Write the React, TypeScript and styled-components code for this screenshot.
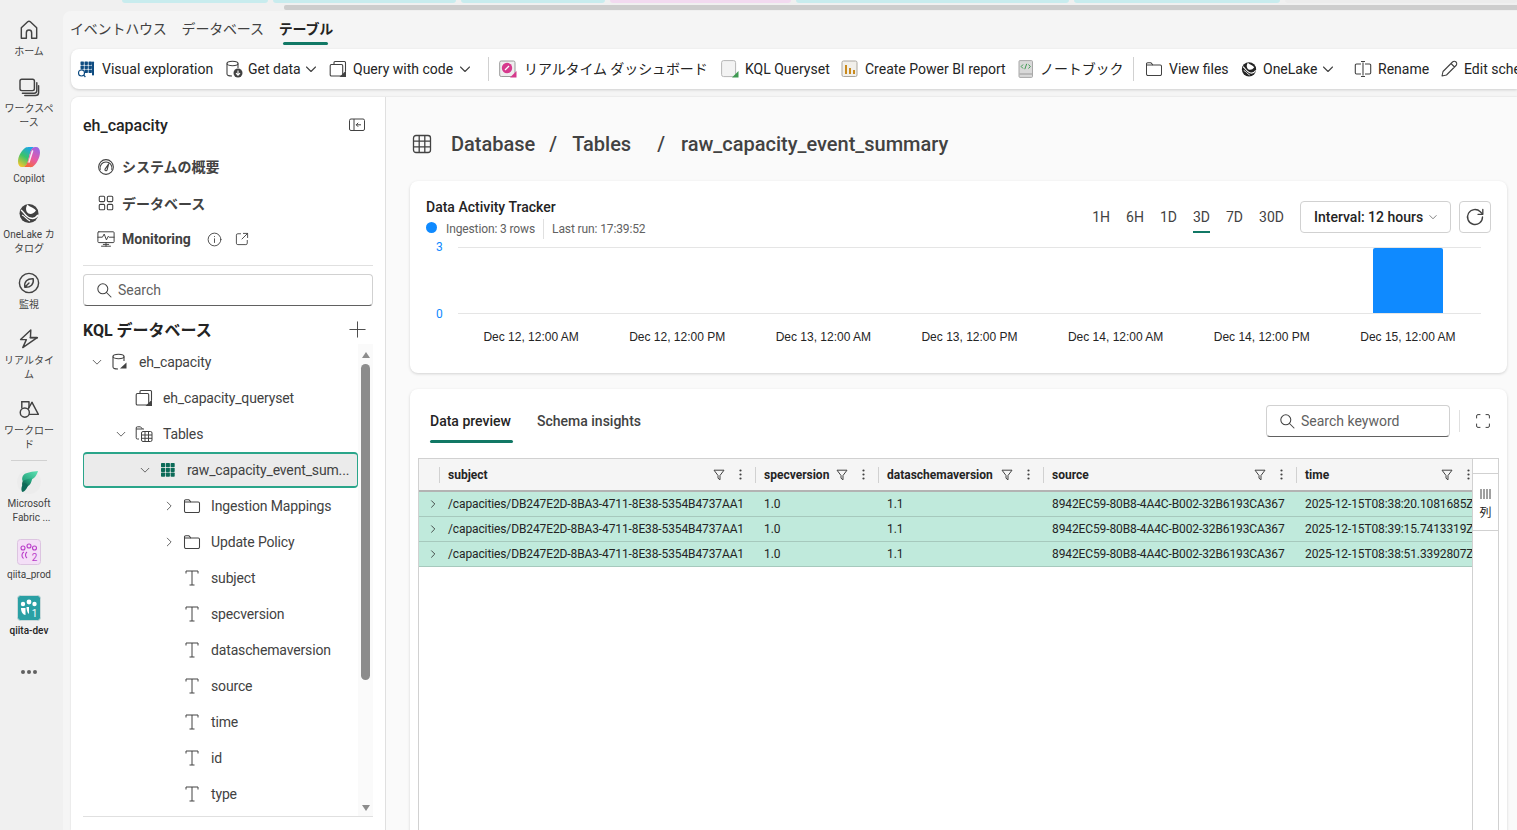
import React from "react";
import styled, { createGlobalStyle } from "styled-components";

const FONT = `Roboto, "Noto Sans CJK JP", sans-serif`;

const Global = createGlobalStyle`
  html, body { margin: 0; padding: 0; height: 100%; overflow: hidden; background: #f0f0f0; }
  body { font-family: ${FONT}; color: #242424; }
  * { box-sizing: border-box; }
  svg { display: block; flex: none; }
`;

const Page = styled.div`
  width: 1517px; height: 830px; overflow: hidden; display: flex; flex-direction: column; background: #f0f0f0;
`;
const TabStrip = styled.div`
  height: 3px; display: flex; gap: 5px; padding-left: 122px; flex: none;
`;
const StripTab = styled.div<{ $w: number; $c: string }>`
  width: ${p => p.$w}px; background: ${p => p.$c}; border-radius: 0 0 4px 4px;
`;
const TopScroll = styled.div`
  height: 5px; margin: 2px 0 1px 284px; background: #cdcdcd; flex: none; border-radius: 2px 0 0 2px;
`;
const Body = styled.div`
  flex: 1; min-height: 0; display: flex;
`;

/* Rail */
const Rail = styled.nav`
  width: 63px; flex: none; padding: 7px 5px 0 0; display: flex; flex-direction: column; align-items: center;
`;
const RailItem = styled.div<{ $after?: number }>`
  width: 58px; display: flex; flex-direction: column; align-items: center;
  margin-bottom: ${p => p.$after ?? 15}px;
`;
const RailLabel = styled.div<{ $strong?: boolean }>`
  margin-top: 3px; font-size: 10px; line-height: 14px; text-align: center; white-space: nowrap;
  color: ${p => (p.$strong ? "#242424" : "#424242")};
  font-weight: ${p => (p.$strong ? 500 : 400)};
`;
const RailRule = styled.div`
  width: 36px; height: 1px; background: #d1d1d1; margin: 0 0 9px;
`;
const RailDots = styled.div`
  display: flex; gap: 2px;
  span { width: 4px; height: 4px; border-radius: 50%; background: #616161; }
`;

/* Main */
const Main = styled.div`
  flex: 1; min-width: 0; display: flex; flex-direction: column; background: #f5f5f5; border-radius: 8px 0 0 0;
`;
const TopTabs = styled.div`
  height: 38px; flex: none; display: flex; padding-left: 7px; gap: 15px;
`;
const TopTab = styled.div<{ $on?: boolean }>`
  position: relative; height: 34px; line-height: 37px; font-size: 14px; letter-spacing: -.2px;
  color: ${p => (p.$on ? "#242424" : "#424242")}; font-weight: ${p => (p.$on ? 700 : 400)};
  &::after {
    content: ""; display: ${p => (p.$on ? "block" : "none")}; position: absolute; left: 4px; right: 5px; bottom: 0;
    height: 3px; background: #117865; border-radius: 2px;
  }
`;
const Toolbar = styled.div`
  height: 40px; flex: none; margin-left: 8px; background: #fff; border-radius: 8px 0 0 8px;
  box-shadow: 0 1px 3px rgba(0,0,0,.16); display: flex; align-items: center; padding-left: 6px; overflow: hidden;
`;
const Tool = styled.div<{ $w: number; $gap?: number }>`
  flex: none; width: ${p => p.$w}px; display: flex; align-items: center; gap: ${p => p.$gap ?? 6}px;
  font-size: 14px; color: #242424; white-space: nowrap;
`;
const ToolSep = styled.div<{ $w: number }>`
  flex: none; width: ${p => p.$w}px; height: 24px;
  &::before { content: ""; display: block; width: 1px; height: 24px; background: #d1d1d1; }
`;
const Caret = styled.span<{ $m: number }>`
  margin-left: ${p => p.$m}px; display: flex;
`;
const JaLabel = styled.span`
  letter-spacing: -.1px; margin-top: -2px;
`;
const Workspace = styled.div`
  flex: 1; min-height: 0; margin-top: 8px; margin-left: 8px; display: flex; background: #fafafa;
  border-radius: 8px 0 0 0; box-shadow: 0 0 2px rgba(0,0,0,.14);
`;

/* Left panel */
const Panel = styled.aside`
  width: 315px; flex: none; background: #fff; padding: 16px 12px 0; border-right: 1px solid #e0e0e0;
  border-radius: 8px 0 0 0; display: flex; flex-direction: column;
`;
const PanelHead = styled.div`
  height: 24px; display: flex; align-items: center; justify-content: space-between; padding-right: 8px;
  font-size: 16px; font-weight: 500; color: #242424;
`;
const PanelNav = styled.div`
  margin-top: 12px; padding-left: 14px; padding-bottom: 8px; border-bottom: 1px solid #e0e0e0;
`;
const PanelLink = styled.div`
  height: 36px; display: flex; align-items: center; font-size: 14px; font-weight: 700; color: #424242;
  > svg:first-child { margin-right: 7px; }
`;
const JaLink = styled.span`
  margin-top: -2px;
`;
const LinkIcons = styled.span`
  display: flex; align-items: center; gap: 13px; margin-left: 16px;
`;
const SearchBox = styled.div<{ $w?: number }>`
  height: 32px; flex: none; width: ${p => (p.$w ? `${p.$w}px` : "auto")};
  border: 1px solid #d1d1d1; border-bottom-color: #616161; border-radius: 4px;
  display: flex; align-items: center; gap: 6px; padding-left: 12px; font-size: 14px; color: #616161; background: #fff;
`;
const PanelSearch = styled(SearchBox)`
  margin-top: 8px;
`;
const SectionHead = styled.div`
  height: 28px; margin-top: 9px; margin-bottom: 1px; display: flex; align-items: center; justify-content: space-between;
  padding-right: 7px; font-size: 16px; font-weight: 700; flex: none;
`;
const TreeWrap = styled.div`
  height: 473px; flex: none; display: flex; border-bottom: 1px solid #e0e0e0;
`;
const Tree = styled.div`
  width: 275px; overflow: hidden;
`;
const TreeRow = styled.div<{ $level: number; $on?: boolean }>`
  height: 36px; display: flex; align-items: center; padding-left: ${p => p.$level * 24 + 2}px;
  font-size: 14px; letter-spacing: -.15px; color: #424242; white-space: nowrap;
  ${p => p.$on && `
    background: #ebebeb; border: 1px solid #2aa58a; border-width: 2px 1px; border-radius: 4px; padding-left: ${p.$level * 24 + 1}px;
  `}
`;
const TreeChevron = styled.span`
  width: 24px; flex: none; display: flex; justify-content: center;
`;
const TreeIcon = styled.span`
  width: 18px; margin: 0 10px 0 2px; flex: none; display: flex; justify-content: center;
`;
const ScrollTrack = styled.div`
  width: 15px; flex: none; background: #fafafa; display: flex; flex-direction: column; align-items: center;
  padding-top: 8px;
`;
const Arrow = styled.div<{ $down?: boolean }>`
  width: 0; height: 0; border-left: 4.5px solid transparent; border-right: 4.5px solid transparent;
  ${p => (p.$down ? "border-top: 6px solid #8c8c8c; margin-top: 125px;" : "border-bottom: 6px solid #8c8c8c;")}
`;
const Thumb = styled.div`
  width: 9px; height: 316px; margin-top: 6px; background: #8c8c8c; border-radius: 5px;
`;

/* Right pane */
const Pane = styled.main`
  flex: 1; min-width: 0; padding: 33px 10px 0 24px; display: flex; flex-direction: column;
`;
const Crumbs = styled.div`
  height: 28px; flex: none; display: flex; align-items: center; font-size: 20px; font-weight: 500; color: #424242; padding-left: 2px;
`;
const CrumbText = styled.span<{ $l: number }>`
  margin-left: ${p => p.$l}px; white-space: nowrap;
`;
const Card = styled.section<{ $h: number }>`
  height: ${p => p.$h}px; flex: none; background: #fff; border-radius: 8px; box-shadow: 0 1px 3px rgba(0,0,0,.16);
`;
const TrackerCard = styled(Card)`
  margin-top: 23px; padding: 16px 16px 0;
`;
const TrackerHead = styled.div`
  display: flex; justify-content: space-between;
`;
const TrackerTitle = styled.div`
  font-size: 14px; line-height: 20px; font-weight: 500; color: #242424;
`;
const Meta = styled.div`
  margin-top: 2px; height: 20px; display: flex; align-items: center; font-size: 12px; letter-spacing: -.12px; color: #616161;
`;
const Dot = styled.span`
  width: 11px; height: 11px; border-radius: 50%; background: #0f8aff; margin-right: 9px; margin-top: -3px;
`;
const MetaSep = styled.span`
  width: 1px; height: 20px; background: #e0e0e0; margin: 0 8px;
`;
const Controls = styled.div`
  display: flex; align-items: flex-start; padding-top: 4px;
`;
const RangeTabs = styled.div`
  display: flex; gap: 16px; margin-right: 16px;
`;
const Range = styled.div<{ $on?: boolean }>`
  height: 32px; line-height: 32px; font-size: 14px; color: #424242; position: relative;
  &::after {
    content: ""; display: ${p => (p.$on ? "block" : "none")}; position: absolute; left: 0; right: 0; bottom: 0;
    height: 2px; background: #117865;
  }
`;
const Select = styled.div`
  width: 151px; height: 32px; border: 1px solid #d1d1d1; border-radius: 4px; display: flex; align-items: center;
  padding-left: 13px; gap: 5px; font-size: 14px; font-weight: 500; color: #242424;
`;
const IconBtn = styled.div`
  width: 32px; height: 32px; margin-left: 8px; border: 1px solid #d1d1d1; border-radius: 4px;
  display: flex; align-items: center; justify-content: center;
`;
const Chart = styled.div`
  margin-top: 8px; display: flex; padding-right: 10px;
`;
const YAxis = styled.div`
  width: 32px; height: 80px; margin-top: -6px; margin-bottom: -13px; display: flex; flex-direction: column; justify-content: space-between;
  font-size: 12px; line-height: 13px; color: #0f8aff; padding-left: 10px;
`;
const Plot = styled.div`
  flex: 1; height: 67px; border-top: 1px solid #e5e5e5; border-bottom: 1px solid #e5e5e5;
  display: grid; grid-template-columns: repeat(7, 1fr);
`;
const BarSlot = styled.div`
  display: flex; justify-content: center; align-items: flex-end;
`;
const Bar = styled.div`
  width: 70px; height: 100%; background: #0f8aff; border-radius: 2px 2px 0 0;
`;
const XAxis = styled.div`
  margin: 15px 10px 0 32px; display: grid; grid-template-columns: repeat(7, 1fr);
  font: 12px/16px "Liberation Sans", sans-serif; color: #242424; text-align: center;
`;

const PreviewCard = styled(Card)`
  margin-top: 16px; padding: 16px 8px 0; display: flex; flex-direction: column;
`;
const PreviewHead = styled.div`
  height: 53px; flex: none; display: flex; align-items: flex-start; padding-left: 12px;
`;
const DataTab = styled.div<{ $on?: boolean }>`
  height: 38px; line-height: 32px; font-size: 14px; margin-right: 24px; position: relative;
  min-width: ${p => (p.$on ? "83px" : "0")};
  font-weight: 500; color: ${p => (p.$on ? "#242424" : "#424242")};
  &::after {
    content: ""; display: ${p => (p.$on ? "block" : "none")}; position: absolute; left: 0; right: 0; bottom: 0;
    height: 3px; background: #117865; border-radius: 2px;
  }
`;
const HeadRight = styled.div`
  margin-left: auto; padding-right: 9px; display: flex; align-items: center; height: 32px;
`;
const HeadSep = styled.div`
  width: 1px; height: 22px; background: #e0e0e0; margin: 0 16px 0 9px;
`;
const TableBox = styled.div`
  flex: 1; min-height: 0; display: flex; border: 1px solid #d1d1d1; border-bottom: 0;
`;
const TableMain = styled.div`
  flex: 1; min-width: 0; overflow: hidden;
`;
const Grid = `display: grid; grid-template-columns: 20px 316px 123px 165px 253px 187px; width: 1064px;`;
const HeadRow = styled.div`
  ${Grid}
  height: 33px; background: #f5f5f5; border-bottom: 2px solid #b3b3b3;
`;
const HeadCell = styled.div`
  display: flex; align-items: center; min-width: 0; font-size: 12px; font-weight: 700; color: #242424; white-space: nowrap;
  &::before { content: ""; width: 1px; height: 16px; background: #d1d1d1; margin-right: 8px; flex: none; }
`;
const HeadActions = styled.div`
  margin-left: auto; margin-right: 13px; display: flex; align-items: center; gap: 14px;
`;
const DataRow = styled.div`
  ${Grid}
  height: 25px; background: #c0eadc; border-bottom: 1px solid #a6c9bd; font-size: 12px; letter-spacing: -.115px; color: #242424;
`;
const ExpandCell = styled.div`
  display: flex; align-items: center; padding-left: 9px;
`;
const DataCell = styled.div`
  padding-left: 9px; line-height: 24px; white-space: nowrap; overflow: hidden;
`;
const SideRail = styled.div`
  width: 26px; flex: none; border-left: 1px solid #d1d1d1; padding-top: 14px;
`;
const SideBtn = styled.div`
  height: 58px; border-top: 1px solid #d1d1d1; border-bottom: 1px solid #d1d1d1;
  display: flex; flex-direction: column; align-items: center; gap: 6px; padding-top: 15px;
  font-size: 12px; line-height: 16px; color: #242424;
`;

/* Icons */
type P = { s?: number; c?: string };
const Svg: React.FC<P & { children: React.ReactNode; w?: number }> = ({ s = 20, c = "#424242", w = 1.2, children }) => (
  <svg width={s} height={s} viewBox="0 0 20 20" fill="none" stroke={c} strokeWidth={w} strokeLinecap="round" strokeLinejoin="round">{children}</svg>
);
const Chevron: React.FC<{ dir: "d" | "r"; s?: number; c?: string }> = ({ dir, s = 14, c = "#424242" }) => (
  <svg width={s} height={s} viewBox="0 0 14 14" fill="none" stroke={c} strokeWidth={1.1} strokeLinecap="round" strokeLinejoin="round">
    {dir === "d" ? <path d="M2.5 5 L7 9.5 L11.5 5" /> : <path d="M5 2.5 L9.5 7 L5 11.5" />}
  </svg>
);
const Home = () => <Svg s={24}><path d="M3.6 16.8 V8.2 L8.9 3.2 a1.6 1.6 0 0 1 2.2 0 L16.4 8.2 V16.8 H12.2 V12.2 a2.2 2.2 0 0 0 -4.4 0 V16.8 Z" /></Svg>;
const Stack = () => <Svg s={24}><rect x="2.5" y="3.5" width="12" height="9.5" rx="1.5" /><path d="M16.5 6.5 V13 a2.2 2.2 0 0 1 -2.2 2.2 H4.5" /><path d="M18 9 V14.5 a2.6 2.6 0 0 1 -2.6 2.6 H6.5" /></Svg>;
const Copilot = () => (
  <svg width="24" height="24" viewBox="0 0 24 24">
    <defs>
      <linearGradient id="cpA" x1=".7" y1="0" x2=".2" y2="1"><stop offset="0" stopColor="#1aa5ea" /><stop offset=".5" stopColor="#3cc36a" /><stop offset="1" stopColor="#f6c62b" /></linearGradient>
      <linearGradient id="cpB" x1=".8" y1="0" x2=".3" y2="1"><stop offset="0" stopColor="#9a66e6" /><stop offset=".55" stopColor="#e65aa6" /><stop offset="1" stopColor="#f4693a" /></linearGradient>
    </defs>
    <path d="M8 3 C9 2 10 2 17 2 C14 4 13 8 12 12 C11 16 10.5 19 9 20.5 C8 21.5 7 22 5 22 C2.5 22 1 20 1 16.5 C1 11 5 5 8 3 Z" fill="url(#cpA)" />
    <path d="M16 21.5 C15 22.5 14 22 7 22 C10 20 11 16 12 12 C13 8 13.5 5 15 3.5 C16 2.5 17 2 19 2 C21.5 2 23 4 23 7.5 C23 13 19 19.5 16 21.5 Z" fill="url(#cpB)" />
    <path d="M15.5 6 L12 17" stroke="#fff" strokeOpacity=".85" strokeWidth="1.6" strokeLinecap="round" />
  </svg>
);
const OneLake: React.FC<{ s?: number; c?: string }> = ({ s = 24, c = "#424242" }) => (
  <svg width={s} height={s} viewBox="0 0 24 24" fill="none">
    <circle cx="12" cy="12.5" r="9.5" fill={c} />
    <path d="M4 9 C7 11 9 16 13 17 C16 18 19 17 21 14" stroke="#fff" strokeWidth="1.5" />
    <path d="M10.5 3.5 C8 7 9 11 11.5 12.5 C14 13.5 17 12.5 19 9.5 C16 6 13 6.5 10.5 3.5" fill="#fff" />
    <path d="M5 14 C8 15 9 18 13 20" stroke="#fff" strokeWidth="1.2" />
  </svg>
);
const Monitor = () => <Svg s={24} w={1.2}><circle cx="10" cy="10" r="8" /><path d="M6.5 13.5 C5.8 9 8.5 6.2 13.5 6.5 C14.2 11 11.5 13.8 6.5 13.5 Z M6.5 13.5 L10 10" /></Svg>;
const Bolt = () => <Svg s={24}><path d="M11.5 2.5 L3 10.5 H7.8 L4.8 17.2 L16.8 8.8 H11.2 Z" /><path d="M11 9 L17 9" /></Svg>;
const Shapes = () => <Svg s={24}><path d="M4 4 H10 V9" /><path d="M4 4 V9" /><circle cx="6.5" cy="13" r="3.8" /><path d="M12.5 4.5 L17.8 14.5 H10.6" /><path d="M12.5 4.5 L9.5 9.5" /></Svg>;
const Fabric = () => (
  <svg width="24" height="24" viewBox="0 0 24 24">
    <defs>
      <linearGradient id="fbA" x1="1" y1="0" x2="0" y2="1"><stop offset="0" stopColor="#5fe3b4" /><stop offset="1" stopColor="#1c9a75" /></linearGradient>
      <linearGradient id="fbB" x1="1" y1="0" x2="0" y2="1"><stop offset="0" stopColor="#2dbb8f" /><stop offset="1" stopColor="#0a4f43" /></linearGradient>
    </defs>
    <circle cx="12" cy="12" r="12" fill="#ececec" />
    <path d="M7 4.5 C9 2.5 16 1.5 21 1 C20 4 18.5 8 15 9 L6 12 C4.5 9 5 6.5 7 4.5 Z" fill="url(#fbA)" />
    <path d="M6 11 C8 9.5 12 8.5 15.5 8 C14.5 11.5 13.5 15 11 16 L7 17.5 C4.8 16.5 4.5 13 6 11 Z" fill="url(#fbB)" />
    <path d="M7 13.5 C9 13 10 14 11 16 C9.5 19 7 22 5.5 22 C3.8 21 4 15.5 7 13.5 Z" fill="#0d6a58" />
  </svg>
);
const TeamIcon: React.FC<{ bg: string; bd: string; fg: string; n: string; outline?: boolean }> = ({ bg, bd, fg, n, outline }) => (
  <svg width="24" height="26" viewBox="0 0 24 26">
    <rect x=".5" y=".5" width="23" height="25" rx="3" fill={bg} stroke={bd} />
    {outline ? (
      <g fill="none" stroke={fg} strokeWidth="1.1">
        <circle cx="6" cy="9" r="2" /><circle cx="12" cy="7" r="2" /><circle cx="17.5" cy="9" r="2" />
        <path d="M7 13 C4.5 14 4.2 18 6.5 19.5 M10 13 C8 14.5 8 17.5 10 19" />
      </g>
    ) : (
      <g fill={fg}>
        <circle cx="6" cy="9" r="2.2" /><circle cx="12" cy="7" r="2.4" /><circle cx="17.5" cy="9" r="2.2" />
        <path d="M4 13 H8.5 V20 C6 20 4 17 4 13 Z" /><path d="M9.5 12 H12 V19 C10.5 18 9.5 15 9.5 12 Z" />
      </g>
    )}
    <text x="17.5" y="22" textAnchor="middle" fontSize="10" fontFamily="Roboto, sans-serif" fill={fg}>{n}</text>
  </svg>
);

const VisualIcon = () => (
  <svg width="18" height="18" viewBox="0 0 18 18">
    <g fill="#0f4c81">
      {[3, 7, 11].flatMap(y => [3.5, 7.5, 11.5].map(x => <rect key={`${x}${y}`} x={x} y={y - 1.5} width="3.4" height="3.4" rx=".6" />))}
    </g>
    <rect x="15" y="1.5" width="2" height="14" fill="#0f4c81" rx=".8" />
    <circle cx="4.5" cy="13" r="3" fill="#fff" stroke="#0f4c81" strokeWidth="1.1" />
    <path d="M6.7 15.2 L8.4 17" stroke="#0f4c81" strokeWidth="1.2" />
  </svg>
);
const Cylinder: React.FC<{ badge?: "down" | "arrow" }> = ({ badge }) => (
  <svg width="18" height="18" viewBox="0 0 18 18" fill="none" stroke="#424242" strokeWidth="1.1">
    <ellipse cx="7.5" cy="3.5" rx="5.5" ry="2.2" />
    <path d="M2 3.5 V14 C2 15.5 4 16 7 16 M13 3.5 V8" />
    {badge === "down" ? (
      <g>
        <circle cx="13" cy="13" r="4.5" fill="#424242" stroke="none" />
        <path d="M13 10.5 V15 M11 13.2 L13 15.2 L15 13.2" stroke="#fff" />
      </g>
    ) : (
      <path d="M9 15.5 L15.5 15.5 L15.5 9.5 Z" fill="#424242" stroke="none" />
    )}
  </svg>
);
const QueryIcon = () => (
  <svg width="18" height="18" viewBox="0 0 18 18" fill="none" stroke="#424242" strokeWidth="1.1">
    <path d="M5 4 V2.5 A1 1 0 0 1 6 1.5 H15.5 A1 1 0 0 1 16.5 2.5 V11" />
    <rect x="1.2" y="4.5" width="12.5" height="11.5" rx="1.2" />
    <path d="M10.5 17 L17 17 L17 10.5 Z" fill="#424242" stroke="none" />
  </svg>
);
const DashIcon = () => (
  <svg width="18" height="18" viewBox="0 0 18 18">
    <rect x=".7" y="1" width="15.3" height="15.5" rx="1.5" fill="#eeeeee" stroke="#9a9a9a" />
    <circle cx="8" cy="8" r="5.2" fill="#d63a8d" />
    <path d="M6 10 L10 6" stroke="#fff" strokeWidth="1.3" />
    <path d="M11 17.5 L17.5 17.5 L17.5 11 Z" fill="#d63a8d" />
  </svg>
);
const KqlIcon = () => (
  <svg width="18" height="18" viewBox="0 0 18 18">
    <rect x=".6" y=".6" width="14" height="16" rx="2" fill="#f3f3f3" stroke="#b5b5b5" />
    <path d="M11 17.5 L17.5 17.5 L17.5 11 Z" fill="#3f9a52" />
  </svg>
);
const PbiIcon = () => (
  <svg width="18" height="18" viewBox="0 0 18 18">
    <rect x="1" y="1" width="15" height="15.5" rx="1.5" fill="#f1efea" stroke="#aaa69f" />
    <rect x="4" y="5" width="2" height="9" fill="#c98a1d" /><rect x="8" y="8" width="2" height="6" fill="#c98a1d" /><rect x="12" y="10" width="2" height="4" fill="#c98a1d" />
  </svg>
);
const BookIcon = () => (
  <svg width="16" height="18" viewBox="0 0 16 18">
    <rect x="1" y=".6" width="13.5" height="16.8" rx="1" fill="#d9d9d9" stroke="#a8a8a8" />
    <rect x="1.5" y="13.5" width="12.5" height="1" fill="#9a9a9a" />
    <path d="M5 4.5 L3.2 6.5 L5 8.5 M10.5 4.5 L12.3 6.5 L10.5 8.5 M8.7 3.8 L6.8 9.2" stroke="#3f9a52" strokeWidth="1" fill="none" />
  </svg>
);
const FolderIcon: React.FC<{ s?: number }> = ({ s = 18 }) => (
  <svg width={s} height={s} viewBox="0 0 18 18" fill="none" stroke="#424242" strokeWidth="1.05" strokeLinejoin="round">
    <path d="M1.5 4 A1.2 1.2 0 0 1 2.7 2.8 H6 L8 5 H15.3 A1.2 1.2 0 0 1 16.5 6.2 V14 A1.5 1.5 0 0 1 15 15.5 H3 A1.5 1.5 0 0 1 1.5 14 Z" />
    <path d="M1.5 5 H8" />
  </svg>
);
const RenameIcon = () => (
  <svg width="18" height="18" viewBox="0 0 18 18" fill="none" stroke="#424242" strokeWidth="1.1">
    <path d="M7 4 H2.5 A1.2 1.2 0 0 0 1.3 5.2 V12.8 A1.2 1.2 0 0 0 2.5 14 H7 M11 4 H15.5 A1.2 1.2 0 0 1 16.7 5.2 V12.8 A1.2 1.2 0 0 1 15.5 14 H11" />
    <path d="M9 2.5 V15.5 M7 1.5 H11 M7 16.5 H11" />
  </svg>
);
const PencilIcon = () => (
  <svg width="18" height="18" viewBox="0 0 18 18" fill="none" stroke="#424242" strokeWidth="1.1" strokeLinejoin="round">
    <path d="M2 16 L3 11.5 L12.5 2 A2 2 0 0 1 16 5.5 L6.5 15 Z M11 3.5 L14.5 7" />
  </svg>
);
const Magnifier: React.FC<{ s?: number }> = ({ s = 16 }) => (
  <svg width={s} height={s} viewBox="0 0 16 16" fill="none" stroke="#424242" strokeWidth="1.05" strokeLinecap="round">
    <circle cx="6.8" cy="6.8" r="5" /><path d="M10.5 10.5 L15 15" />
  </svg>
);
const Collapse = () => (
  <svg width="16" height="14" viewBox="0 0 16 14" fill="none" stroke="#424242" strokeWidth="1">
    <rect x=".5" y="1" width="15" height="11.5" rx="1.5" /><path d="M5 1 V12.5" />
    <path d="M12 6.8 H7.2 M9.2 4.8 L7.2 6.8 L9.2 8.8" />
  </svg>
);
const Gauge = () => <Svg s={18}><circle cx="10" cy="10" r="8.2" /><path d="M3.5 13 C2.5 8 6 4.5 10 4.5 C14 4.5 17.5 8 16.5 13" /><path d="M8.8 12.6 L13 6.5 L11.2 13.2 A1.2 1.2 0 0 1 8.8 12.6 Z" /></Svg>;
const Squares = () => <Svg s={18} w={1.2}><rect x="2.5" y="2.5" width="6" height="6" rx="1.2" /><rect x="11.5" y="2.5" width="6" height="6" rx="1.2" /><rect x="2.5" y="11.5" width="6" height="6" rx="1.2" /><rect x="11.5" y="11.5" width="6" height="6" rx="1.2" /></Svg>;
const Pulse = () => <Svg s={18} w={1.1}><rect x="1" y="2" width="18" height="12" rx="1" /><path d="M1 8 H6 L8 4.5 L10.5 11 L12.5 7 L13.5 8 H19" /><path d="M10 14 V18 M5 18 H15 M7 16 H13" /></Svg>;
const Info = () => <Svg s={15} w={1.2}><circle cx="10" cy="10" r="8.5" /><path d="M10 9 V14 M10 6 V6.2" /></Svg>;
const External = () => <Svg s={14} w={1.3}><path d="M8 2.5 H4 A2 2 0 0 0 2 4.5 V16 A2 2 0 0 0 4 18 H15.5 A2 2 0 0 0 17.5 16 V12 M12 2 H18 V8 M18 2 L10 10" /></Svg>;
const Plus = () => <Svg s={17} w={1.1}><path d="M10 1 V19 M1 10 H19" /></Svg>;
const TIcon = () => (
  <svg width="14" height="16" viewBox="0 0 14 16" fill="none" stroke="#424242" strokeWidth="1">
    <path d="M1 3.5 V1 H13 V3.5 M7 1 V15 M4.5 15 H9.5" />
  </svg>
);
const TablesIcon = () => (
  <svg width="18" height="18" viewBox="0 0 18 18" fill="none" stroke="#424242" strokeWidth="1">
    <path d="M4 14 H2.5 A1.2 1.2 0 0 1 1.2 12.8 V3 A1.2 1.2 0 0 1 2.5 1.8 H5.5 L7.5 4 H9 M1.2 4 H7.5" />
    <rect x="6.5" y="6.5" width="10.5" height="10" rx="1.5" /><path d="M6.5 10 H17 M6.5 13.3 H17 M10 6.5 V16.5 M13.5 6.5 V16.5" />
  </svg>
);
const TableGreen = () => (
  <svg width="14" height="14" viewBox="0 0 14 14" fill="#0c6b58">
    {[0, 4.8, 9.6].flatMap(y => [0, 4.8, 9.6].map(x => <rect key={`${x}-${y}`} x={x} y={y} width="4.1" height="4.1" rx=".7" />))}
  </svg>
);
const TableIcon = () => (
  <svg width="20" height="20" viewBox="0 0 20 20" fill="none" stroke="#424242" strokeWidth="1.3">
    <rect x="1.5" y="1.5" width="17" height="17" rx="2.5" /><path d="M1.5 7.2 H18.5 M1.5 12.8 H18.5 M7.2 1.5 V18.5 M12.8 1.5 V18.5" />
  </svg>
);
const Refresh = () => <Svg s={20} w={1.35}><path d="M17.5 10 A7.5 7.5 0 1 1 15.3 4.7 L17.5 7" /><path d="M17.8 2.5 V7.3 H13" /></Svg>;
const FullScreen = () => (
  <svg width="14" height="14" viewBox="0 0 14 14" fill="none" stroke="#424242" strokeWidth="1" strokeLinecap="round">
    <path d="M.6 4 V2 A1.4 1.4 0 0 1 2 .6 H4 M10 .6 H12 A1.4 1.4 0 0 1 13.4 2 V4 M13.4 10 V12 A1.4 1.4 0 0 1 12 13.4 H10 M4 13.4 H2 A1.4 1.4 0 0 1 .6 12 V10" />
  </svg>
);
const Funnel = () => (
  <svg width="12" height="12" viewBox="0 0 12 12" fill="none" stroke="#424242" strokeWidth="1" strokeLinejoin="round">
    <path d="M1 1.2 H11 L7 6.5 V10.8 L5 9.2 V6.5 Z" />
  </svg>
);
const VDots = () => (
  <svg width="3" height="11" viewBox="0 0 3 11" fill="#424242"><circle cx="1.5" cy="1.5" r="1.1" /><circle cx="1.5" cy="5.5" r="1.1" /><circle cx="1.5" cy="9.5" r="1.1" /></svg>
);
const Columns = () => (
  <svg width="11" height="10" viewBox="0 0 11 10" stroke="#424242" strokeWidth="1"><path d="M1 0 V10 M4 0 V10 M7 0 V10 M10 0 V10" /></svg>
);

const strip = [
  [146, "#c8ecee"], [183, "#c8ecee"], [144, "#c8ecee"], [181, "#f2daf0"], [273, "#c8ecee"], [206, "#c8ecee"], [232, "#ececec"],
] as const;

const tree: { level: number; name: string; chev?: "d" | "r"; icon: React.ReactNode; on?: boolean }[] = [
  { level: 0, name: "eh_capacity", chev: "d", icon: <Cylinder /> },
  { level: 1, name: "eh_capacity_queryset", icon: <QueryIcon /> },
  { level: 1, name: "Tables", chev: "d", icon: <TablesIcon /> },
  { level: 2, name: "raw_capacity_event_sum...", chev: "d", icon: <TableGreen />, on: true },
  { level: 3, name: "Ingestion Mappings", chev: "r", icon: <FolderIcon /> },
  { level: 3, name: "Update Policy", chev: "r", icon: <FolderIcon /> },
  ...["subject", "specversion", "dataschemaversion", "source", "time", "id", "type"].map(name => ({ level: 3, name, icon: <TIcon /> })),
];

const columns = ["subject", "specversion", "dataschemaversion", "source", "time"];
const times = ["2025-12-15T08:38:20.1081685Z", "2025-12-15T08:39:15.7413319Z", "2025-12-15T08:38:51.3392807Z"];
const xLabels = ["Dec 12, 12:00 AM", "Dec 12, 12:00 PM", "Dec 13, 12:00 AM", "Dec 13, 12:00 PM", "Dec 14, 12:00 AM", "Dec 14, 12:00 PM", "Dec 15, 12:00 AM"];

export default function App() {
  return (
    <Page>
      <Global />
      <TabStrip>{strip.map(([w, c], i) => <StripTab key={i} $w={w} $c={c} />)}</TabStrip>
      <TopScroll />
      <Body>
        <Rail>
          <RailItem $after={16}><Home /><RailLabel>ホーム</RailLabel></RailItem>
          <RailItem><Stack /><RailLabel>ワークスペ<br />ース</RailLabel></RailItem>
          <RailItem><Copilot /><RailLabel>Copilot</RailLabel></RailItem>
          <RailItem><OneLake /><RailLabel>OneLake カ<br />タログ</RailLabel></RailItem>
          <RailItem><Monitor /><RailLabel>監視</RailLabel></RailItem>
          <RailItem><Bolt /><RailLabel>リアルタイ<br />ム</RailLabel></RailItem>
          <RailItem $after={8}><Shapes /><RailLabel>ワークロー<br />ド</RailLabel></RailItem>
          <RailRule />
          <RailItem $after={14}><Fabric /><RailLabel>Microsoft<br />&nbsp;&nbsp;Fabric ...</RailLabel></RailItem>
          <RailItem $after={13}><TeamIcon bg="#f4dff7" bd="#dcc4e0" fg="#b93cc9" n="2" outline /><RailLabel>qiita_prod</RailLabel></RailItem>
          <RailItem $after={32}><TeamIcon bg="#2aa0a4" bd="#c9d9da" fg="#ffffff" n="1" /><RailLabel $strong>qiita-dev</RailLabel></RailItem>
          <RailDots><span /><span /><span /></RailDots>
        </Rail>
        <Main>
          <TopTabs>
            <TopTab>イベントハウス</TopTab>
            <TopTab>データベース</TopTab>
            <TopTab $on>テーブル</TopTab>
          </TopTabs>
          <Toolbar>
            <Tool $w={148} $gap={7}><VisualIcon />Visual exploration</Tool>
            <Tool $w={104} $gap={5}><Cylinder badge="down" />Get data<Caret $m={-2}><Chevron dir="d" /></Caret></Tool>
            <Tool $w={159}><QueryIcon />Query with code<Caret $m={-1}><Chevron dir="d" /></Caret></Tool>
            <ToolSep $w={11} />
            <Tool $w={222} $gap={7}><DashIcon /><JaLabel>リアルタイム ダッシュボード</JaLabel></Tool>
            <Tool $w={120}><KqlIcon />KQL Queryset</Tool>
            <Tool $w={177}><PbiIcon />Create Power BI report</Tool>
            <Tool $w={115}><BookIcon /><JaLabel>ノートブック</JaLabel></Tool>
            <ToolSep $w={12} />
            <Tool $w={95}><FolderIcon />View files</Tool>
            <Tool $w={114} $gap={5}><OneLake s={18} c="#242424" />OneLake<Caret $m={-1}><Chevron dir="d" /></Caret></Tool>
            <Tool $w={86}><RenameIcon />Rename</Tool>
            <Tool $w={120}><PencilIcon />Edit schema</Tool>
          </Toolbar>
          <Workspace>
            <Panel>
              <PanelHead>eh_capacity<Collapse /></PanelHead>
              <PanelNav>
                <PanelLink><Gauge /><JaLink>システムの概要</JaLink></PanelLink>
                <PanelLink><Squares />データベース</PanelLink>
                <PanelLink><Pulse />Monitoring<LinkIcons><Info /><External /></LinkIcons></PanelLink>
              </PanelNav>
              <PanelSearch><Magnifier />Search</PanelSearch>
              <SectionHead>KQL データベース<Plus /></SectionHead>
              <TreeWrap>
                <Tree>
                  {tree.map(r => (
                    <TreeRow key={r.name} $level={r.level} $on={r.on}>
                      <TreeChevron>{r.chev && <Chevron dir={r.chev} s={12} c="#616161" />}</TreeChevron>
                      <TreeIcon>{r.icon}</TreeIcon>
                      {r.name}
                    </TreeRow>
                  ))}
                </Tree>
                <ScrollTrack>
                  <Arrow />
                  <Thumb />
                  <Arrow $down />
                </ScrollTrack>
              </TreeWrap>
            </Panel>
            <Pane>
              <Crumbs>
                <TableIcon />
                <CrumbText $l={19}>Database</CrumbText>
                <CrumbText $l={14}>/</CrumbText>
                <CrumbText $l={15}>Tables</CrumbText>
                <CrumbText $l={26}>/</CrumbText>
                <CrumbText $l={16}>raw_capacity_event_summary</CrumbText>
              </Crumbs>
              <TrackerCard $h={192}>
                <TrackerHead>
                  <div>
                    <TrackerTitle>Data Activity Tracker</TrackerTitle>
                    <Meta><Dot />Ingestion: 3 rows<MetaSep />Last run: 17:39:52</Meta>
                  </div>
                  <Controls>
                    <RangeTabs>
                      {["1H", "6H", "1D", "3D", "7D", "30D"].map(r => <Range key={r} $on={r === "3D"}>{r}</Range>)}
                    </RangeTabs>
                    <Select>Interval: 12 hours<Chevron dir="d" s={10} c="#616161" /></Select>
                    <IconBtn><Refresh /></IconBtn>
                  </Controls>
                </TrackerHead>
                <Chart>
                  <YAxis><span>3</span><span>0</span></YAxis>
                  <Plot>
                    {xLabels.map((l, i) => <BarSlot key={l}>{i === 6 && <Bar />}</BarSlot>)}
                  </Plot>
                </Chart>
                <XAxis>{xLabels.map(l => <div key={l}>{l}</div>)}</XAxis>
              </TrackerCard>
              <PreviewCard $h={460}>
                <PreviewHead>
                  <DataTab $on>Data preview</DataTab>
                  <DataTab>Schema insights</DataTab>
                  <HeadRight>
                    <SearchBox $w={184}><Magnifier />Search keyword</SearchBox>
                    <HeadSep />
                    <FullScreen />
                  </HeadRight>
                </PreviewHead>
                <TableBox>
                  <TableMain>
                    <HeadRow>
                      <div />
                      {columns.map(c => (
                        <HeadCell key={c}>{c}<HeadActions><Funnel /><VDots /></HeadActions></HeadCell>
                      ))}
                    </HeadRow>
                    {times.map(t => (
                      <DataRow key={t}>
                        <ExpandCell><Chevron dir="r" s={10} c="#242424" /></ExpandCell>
                        <DataCell>/capacities/DB247E2D-8BA3-4711-8E38-5354B4737AA1</DataCell>
                        <DataCell>1.0</DataCell>
                        <DataCell>1.1</DataCell>
                        <DataCell>8942EC59-80B8-4A4C-B002-32B6193CA367</DataCell>
                        <DataCell>{t}</DataCell>
                      </DataRow>
                    ))}
                  </TableMain>
                  <SideRail><SideBtn><Columns />列</SideBtn></SideRail>
                </TableBox>
              </PreviewCard>
            </Pane>
          </Workspace>
        </Main>
      </Body>
    </Page>
  );
}
